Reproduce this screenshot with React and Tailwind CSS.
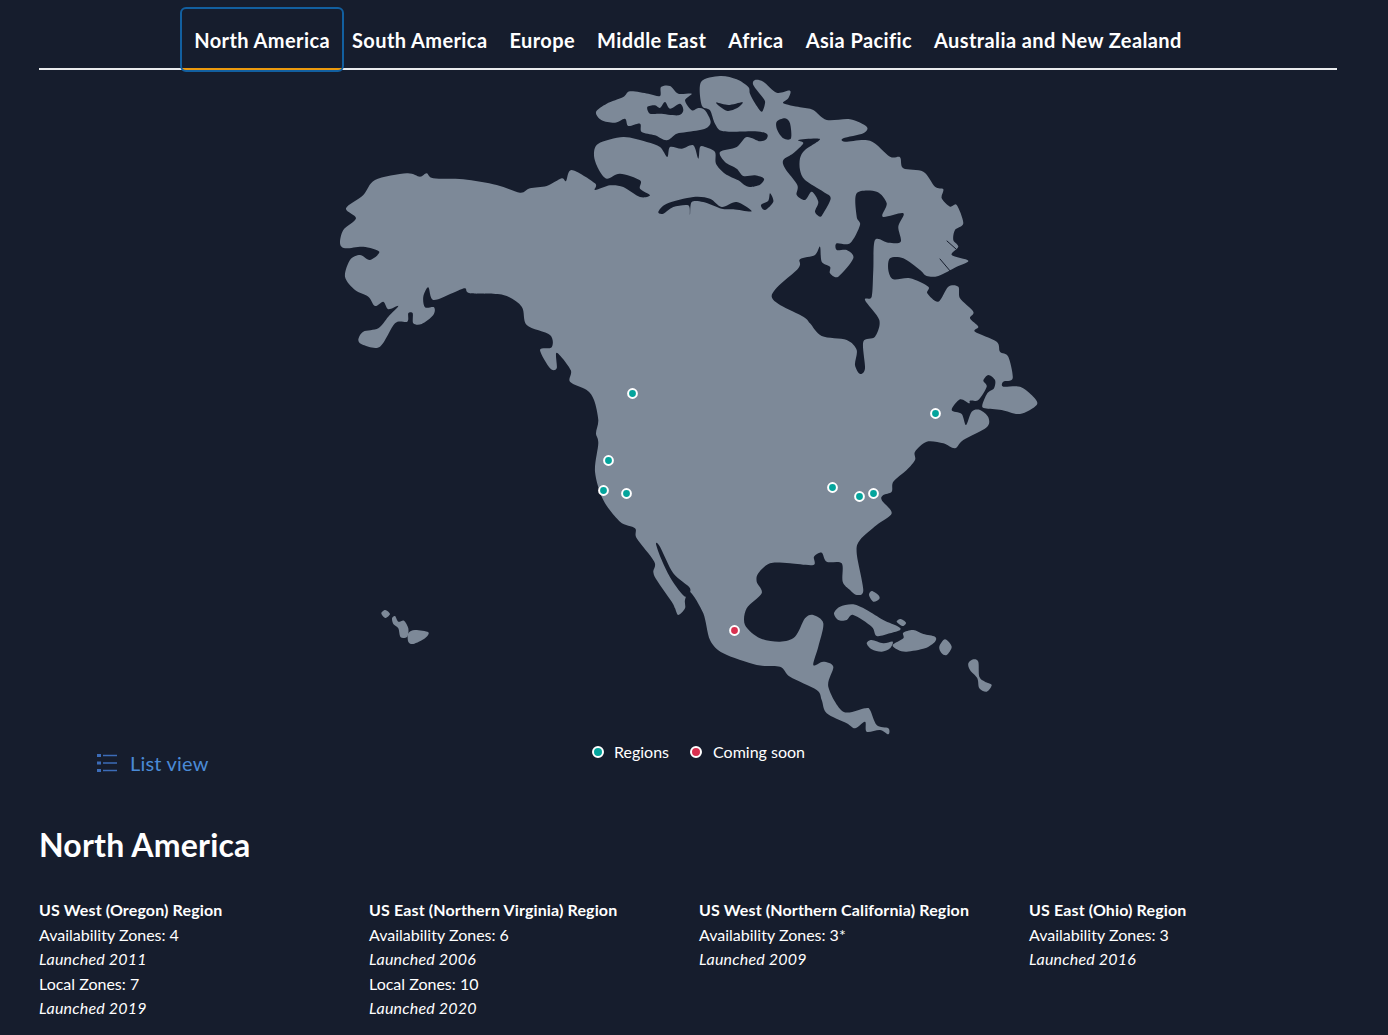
const BG = "#161d2d";

const at = (ox, oy, flat) => {
  const out = [];
  for (let i = 0; i < flat.length; i += 2) out.push([ox + flat[i] / 3, oy + flat[i + 1] / 3]);
  return out;
};

const smooth = (pts, k = 0.15) => {
  const n = pts.length;
  const f = (v) => v.toFixed(1);
  let d = `M${f(pts[0][0])} ${f(pts[0][1])}`;
  for (let i = 0; i < n; i++) {
    const p0 = pts[(i - 1 + n) % n];
    const p1 = pts[i];
    const p2 = pts[(i + 1) % n];
    const p3 = pts[(i + 2) % n];
    const c1x = p1[0] + (p2[0] - p0[0]) * k;
    const c1y = p1[1] + (p2[1] - p0[1]) * k;
    const c2x = p2[0] - (p3[0] - p1[0]) * k;
    const c2y = p2[1] - (p3[1] - p1[1]) * k;
    d += `C${f(c1x)} ${f(c1y)} ${f(c2x)} ${f(c2y)} ${f(p2[0])} ${f(p2[1])}`;
  }
  return d + "Z";
};

const mainland = [
  ...at(330, 70, [48,415,100,375,135,330,230,310,270,320,290,310,310,325,400,328,500,345,570,368,600,355,650,348,695,325,708,333,725,300,795,340,795,360]),
  ...at(590, 72, [60,340,100,345,150,375,180,370,150,350,150,325,90,305,50,320,25,290,12,250,25,215,100,195,170,210,210,225,232,255,240,225,275,230,310,220,325,260,330,225,345,225,375,240,378,275,405,305,445,325,462,338,480,345,510,338,522,320,495,310,460,312,440,290,405,270,390,240,440,225,470,195,510,208,530,200,530,185,495,178,400,178,375,155,360,115,335,100,333,30,390,12,440,22,475,45,480,65]),
  ...at(690, 70, [195,100,215,125,225,100,220,85,190,45,195,30,220,35,260,68,300,62,295,85,280,100,330,112,370,120,410,150,480,148,530,170,520,190,460,205,465,215,540,212,600,260,630,262,640,295,700,305,735,350,760,358,755,385,780,410,800,405,820,460,795,480,790,510,805,530,785,555,835,572,800,590,745,618,710,618,690,600,640,565,600,565,595,600,610,628,660,625,715,650,712,670,745,695,775,650,805,650,810,685,850,725,840,745,865,770,855,785,920,815,930,845,955,860,968,925]),
  ...at(930, 340, [220,125,220,140,270,140,310,170,320,195,270,222,215,210,165,205,157,195,172,160,192,145,195,120,175,105,160,122,170,140,145,180,120,182,118,190,90,178,65,210,95,222,108,255,125,215,150,210,175,232,170,262,100,300]),
  ...at(690, 400, [795,145,760,130,710,125,675,155,675,180,650,210,610,245,605,275,580,285,575,300,605,340,560,375,510,420,500,460,520,570,500,585,480,570,458,545,455,490,410,485,395,458,372,470,370,495,300,490,240,490,205,520,200,545,215,580,170,625,165,675,210,715,270,725,315,710,345,655,370,645,400,670,385,740,370,795,400,785,430,800,415,860,460,935,525,925,540,930,560,975,595,985,595,1003,570,990,530,995,525,965,495,985,470,970,410,940,395,900,380,870,300,830,270,800,200,795,100,760,60,720,40,640,0,575]),
  ...at(370, 400, [945,600,945,625,925,645,915,625,905,605,860,540,850,515,853,485,800,415,795,385,750,365,700,300,675,215,685,130,678,100,685,60,672,0]),
  ...at(330, 70, [770,960,720,935,722,900,680,848,680,895,660,895,630,840,665,832,660,795,590,765,575,710,520,675,420,670,405,655,370,668,310,690,295,652,280,680,285,712,312,712,310,735,275,762,250,760,248,730,235,730,232,755,195,760,150,830,100,825,85,810,100,785,145,775,175,740,205,708,175,718,160,695,135,708,115,680,75,660,45,620,60,570,90,555,120,570,148,545,100,530,45,535,30,520,40,480,78,445]),
];

const islands = [
  at(590, 72, [18,120,50,95,100,75,120,58,175,65,210,72,213,45,240,42,265,65,305,65,285,85,305,115,325,108,345,115,362,150,345,170,290,180,260,185,230,205,195,190,155,180,150,155,115,162,105,140,75,152,35,145]),
  at(690, 400, [537,585,545,573,565,585,568,597,550,605]),
  at(690, 400, [432,640,450,620,490,613,530,630,580,660,625,680,630,690,600,700,560,708,545,680,490,645,470,660,445,660]),
  at(690, 400, [620,665,632,657,648,668,638,678]),
  at(690, 400, [530,730,545,720,580,730,608,725,600,745,575,755,545,748]),
  at(690, 400, [608,735,640,715,640,698,670,690,700,702,735,710,735,725,705,745,650,755,625,750]),
  at(690, 400, [748,740,765,718,785,740,770,765,755,760]),
  at(690, 400, [835,790,850,778,865,785,868,830,885,845,905,855,890,875,868,865,862,835,840,810]),
  at(370, 400, [34,640,46,630,60,642,46,654]),
  at(370, 400, [66,655,75,648,85,665,102,662,115,685,112,710,92,712,85,685,70,672]),
  at(370, 400, [115,700,135,690,175,697,165,715,130,732,115,725]),
];

const waters = [
  at(590, 72, [172,105,195,100,210,108,225,90,240,110,270,95,280,115,265,130,210,125,180,125]),
  at(590, 72, [205,420,230,395,310,375,360,380,395,405,440,390,485,418,430,412,395,410,340,390,305,390,300,428,295,400,250,405,220,425]),
  at(690, 70, [78,98,115,105,158,97,140,115,110,122]),
  at(690, 70, [260,155,285,145,300,160,303,205,280,205,262,180]),
  at(690, 70, [325,210,390,207,345,240,330,265,330,300,345,330,400,365,422,385,400,430,390,440,375,425,385,395,365,365,345,390,320,375,322,345,285,295,280,270,310,250,340,220]),
  at(690, 70, [240,370,250,395,225,420,213,405,235,392]),
  at(690, 70, [500,370,560,365,590,400,578,440,640,430,625,470,632,515,595,518,555,510,550,600,545,680,525,690,568,750,555,800,520,815,525,895,510,912,495,885,500,840,470,810,395,798,360,760,340,740,245,680,325,595,330,568,375,555,390,530,395,575,420,590,420,610,445,620,490,565,470,540,440,540,440,520,480,520,510,465,500,440]),
  at(370, 400, [858,432,870,440,910,520,960,565,945,590,905,540,875,480]),
];

const regions = [[632.5,393.5],[608.5,460.5],[603.5,490.5],[626.5,493.5],[832.5,487.5],[859.5,496.5],[873.5,493.5],[935.5,413.5]];

const tabs = ["North America","South America","Europe","Middle East","Africa","Asia Pacific","Australia and New Zealand"];

const cards = [
  { title: "US West (Oregon) Region", lines: [["Availability Zones: 4"],["Launched 2011",1],["Local Zones: 7"],["Launched 2019",1]] },
  { title: "US East (Northern Virginia) Region", lines: [["Availability Zones: 6"],["Launched 2006",1],["Local Zones: 10"],["Launched 2020",1]] },
  { title: "US West (Northern California) Region", lines: [["Availability Zones: 3*"],["Launched 2009",1]] },
  { title: "US East (Ohio) Region", lines: [["Availability Zones: 3"],["Launched 2016",1]] },
];

function NorthAmericaMap() {
  return (
    <svg viewBox="338 74 702 664" className="block w-[702px] h-[664px] ml-[299px]" aria-label="Map of North America">
      <path d={smooth(mainland)} className="fill-[#7d8998]" />
      {islands.map((p, i) => <path key={i} d={smooth(p)} className="fill-[#7d8998]" />)}
      {waters.map((p, i) => <path key={i} d={smooth(p)} fill={BG} />)}
      <g stroke={BG} strokeWidth="1" fill="none" strokeLinecap="round">
        <path d="M947 241L956 249" />
        <path d="M940 259L951 272" />
      </g>
      {regions.map(([x, y], i) => (
        <circle key={i} cx={x} cy={y} r="4.4" fill="#04a49c" stroke="#fff" strokeWidth="2" />
      ))}
      <circle cx="734.5" cy="630.5" r="4.4" fill="#d9304f" stroke="#fff" strokeWidth="2" />
    </svg>
  );
}

export default function App() {
  return (
    <div className="h-[1035px] overflow-hidden bg-[#161d2d] text-white px-[39px] pt-[11px] font-['Lato','Liberation_Sans',sans-serif]">
      <div className="flex justify-center h-[59px] border-b-2 border-[#e9ebed] w-[1298px]">
        {tabs.map((t, i) => (
          <div key={t} className="relative px-[11px] pt-[16px] text-[20px] leading-[26px] font-bold tracking-[0.4px] text-white whitespace-nowrap">
            {t}
            {i === 0 && (
              <>
                <span className="absolute left-[-1px] right-[-1px] bottom-[-2px] h-[2px] bg-[#ec9a0e]" />
                <span className="absolute left-[-3px] right-[-3px] top-[-4px] bottom-[-4px] border-2 border-[#125f9f] rounded-[6px]" />
              </>
            )}
          </div>
        ))}
      </div>
      <div className="pt-[4px]">
        <NorthAmericaMap />
      </div>
      <div className="flex items-start h-[40px]">
        <div className="flex items-center w-[553px] pl-[58px] pt-[11px] text-[20px] leading-[28px] tracking-[0.2px] text-[#4a8ad6]">
          <svg viewBox="0 0 20 20" className="w-[20px] h-[20px] mr-[13px]" fill="#3c6cb8" stroke="#3c6cb8">
            <rect x="0" y="1" width="4" height="3" stroke="none" />
            <rect x="0" y="8.5" width="4" height="3" stroke="none" />
            <rect x="0" y="16" width="4" height="3" stroke="none" />
            <path d="M6 2.5H20M6 10H20M6 17.5H20" strokeWidth="1.4" fill="none" />
          </svg>
          List view
        </div>
        <div className="flex items-center pt-[2px] text-[16px] leading-[24px]">
          <span className="w-[12px] h-[12px] rounded-full bg-[#04a49c] border-2 border-white mr-[10px]" />
          <span className="mr-[21px]">Regions</span>
          <span className="w-[12px] h-[12px] rounded-full bg-[#d9304f] border-2 border-white mr-[11px]" />
          <span>Coming soon</span>
        </div>
      </div>
      <h2 className="mt-[47px] text-[32px] leading-[40px] font-bold tracking-[0.2px]">North America</h2>
      <div className="mt-[33px] grid grid-cols-[repeat(4,330px)] text-[16px] leading-[24.5px]">
        {cards.map((c) => (
          <div key={c.title}>
            <div className="font-bold tracking-[0.13px]">{c.title}</div>
            {c.lines.map(([l, it]) => (
              <div key={l} className={it ? "italic tracking-[0.2px]" : ""}>{l}</div>
            ))}
          </div>
        ))}
      </div>
    </div>
  );
}
